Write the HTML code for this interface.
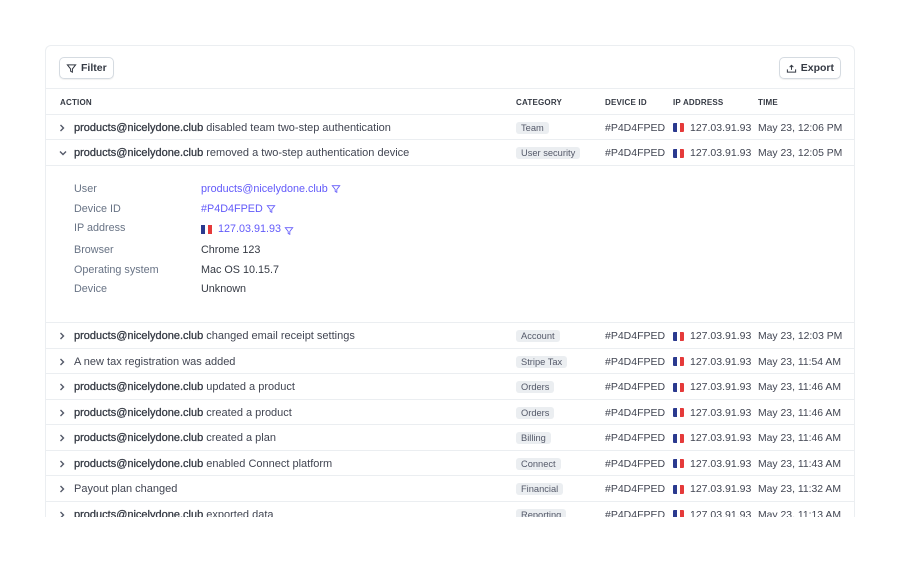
<!DOCTYPE html>
<html><head><style>
*{margin:0;padding:0;box-sizing:border-box}
body{width:900px;height:563px;background:#fff;font-family:"Liberation Sans",sans-serif;color:#414552;position:relative;overflow:hidden}
.card{position:absolute;left:45px;top:45px;width:810px;height:472px;border:1px solid #ebeef1;border-bottom:none;border-radius:6px 6px 0 0;overflow:hidden}
.btn{position:absolute;top:11px;height:22px;border:1px solid #d5dbe1;border-radius:5px;font-size:10.5px;font-weight:bold;color:#353a44;display:flex;align-items:center;gap:4px;padding:0 6px;box-shadow:0 1px 1px rgba(0,0,0,.06);white-space:nowrap}
.btn svg{flex-shrink:0}
.line{position:absolute;left:0;right:0;height:1px;background:#ebeef1}
.row{position:absolute;left:0;right:0;height:25.5px;border-bottom:1px solid #ebeef1;font-size:10.5px}
.row>span{position:absolute;top:1px;line-height:25px;white-space:nowrap}
.chev{position:absolute;left:12px;top:8px}
.act{left:28px;font-size:11px}
.act b{color:#353a44;font-weight:normal;-webkit-text-stroke:0.3px #353a44}
.row>span.cat{left:470px;top:7px;line-height:12px;background:#ebeef1;color:#545969;font-size:9.3px;padding:0 5px;border-radius:3px}
.dev{left:559px}
.row>span.flag{left:627px;width:11px;height:9px;top:8.5px;display:flex;border-radius:1px;overflow:hidden}
.flag i{flex:1}
.ip{left:644px}
.tm{left:712px;font-size:10.4px;color:#414552}
.hd{position:absolute;top:52px;font-size:8px;font-weight:bold;color:#353a44;letter-spacing:.2px}
.dl{position:absolute;left:28px;font-size:10.8px;color:#687385}
.dv{position:absolute;left:155px;font-size:10.8px;color:#353a44;display:flex;align-items:center;gap:3px}
.lk{color:#625afa}
</style></head><body>
<div class="card">
<div class="btn" style="left:13px"><svg width="11" height="11" viewBox="0 0 12 12" fill="none" stroke="#353a44" stroke-width="1.1"><path d="M1.5 2h9L7 6.5V10L5 9V6.5z"/></svg>Filter</div>
<div class="btn" style="right:13px"><svg width="11" height="11" viewBox="0 0 12 12" fill="none" stroke="#353a44" stroke-width="1.1"><path d="M1.5 7v3h9V7M6 7.5V2.5M4 4.5l2-2 2 2"/></svg>Export</div>
<div class="line" style="top:42px"></div>
<div class="hd" style="left:14px">ACTION</div>
<div class="hd" style="left:470px">CATEGORY</div>
<div class="hd" style="left:559px">DEVICE ID</div>
<div class="hd" style="left:627px">IP ADDRESS</div>
<div class="hd" style="left:712px">TIME</div>
<div class="line" style="top:68px"></div>

<div class="row" style="top:68.5px"><svg class="chev" width="8" height="10" viewBox="0 0 8 10" fill="none" stroke="#545969" stroke-width="1.4"><path d="M2.5 2l3 3-3 3"/></svg><span class="act"><b>products@nicelydone.club</b> disabled team two-step authentication</span><span class="cat">Team</span><span class="dev">#P4D4FPED</span><span class="flag"><i style="background:#2b3a8f"></i><i style="background:#fff"></i><i style="background:#e53a3a"></i></span><span class="ip">127.03.91.93</span><span class="tm">May 23, 12:06 PM</span></div>
<div class="row" style="top:94px"><svg class="chev" width="10" height="10" viewBox="0 0 10 10" fill="none" stroke="#545969" stroke-width="1.4"><path d="M2 3.5l3 3 3-3"/></svg><span class="act"><b>products@nicelydone.club</b> removed a two-step authentication device</span><span class="cat">User security</span><span class="dev">#P4D4FPED</span><span class="flag"><i style="background:#2b3a8f"></i><i style="background:#fff"></i><i style="background:#e53a3a"></i></span><span class="ip">127.03.91.93</span><span class="tm">May 23, 12:05 PM</span></div>

<div class="dl" style="top:137px">User</div><div class="dv lk" style="top:137px">products@nicelydone.club <svg width="10" height="10" viewBox="0 0 12 12" fill="none" stroke="#625afa" stroke-width="1"><path d="M1.5 2h9L7 6.5V10L5 9V6.5z"/></svg></div>
<div class="dl" style="top:157px">Device ID</div><div class="dv lk" style="top:157px">#P4D4FPED <svg width="10" height="10" viewBox="0 0 12 12" fill="none" stroke="#625afa" stroke-width="1"><path d="M1.5 2h9L7 6.5V10L5 9V6.5z"/></svg></div>
<div class="dl" style="top:176px">IP address</div><div class="dv lk" style="top:176px"><span style="display:flex;width:11px;height:9px;margin-right:3px"><i style="flex:1;background:#2b3a8f"></i><i style="flex:1;background:#fff"></i><i style="flex:1;background:#e53a3a"></i></span>127.03.91.93 <svg width="10" height="10" viewBox="0 0 12 12" fill="none" stroke="#625afa" stroke-width="1" style="margin-top:4px"><path d="M1.5 2h9L7 6.5V10L5 9V6.5z"/></svg></div>
<div class="dl" style="top:198px">Browser</div><div class="dv" style="top:198px">Chrome 123</div>
<div class="dl" style="top:218px">Operating system</div><div class="dv" style="top:218px">Mac OS 10.15.7</div>
<div class="dl" style="top:237px">Device</div><div class="dv" style="top:237px">Unknown</div>
<div class="line" style="top:276px"></div>

<div class="row" style="top:277px"><svg class="chev" width="8" height="10" viewBox="0 0 8 10" fill="none" stroke="#545969" stroke-width="1.4"><path d="M2.5 2l3 3-3 3"/></svg><span class="act"><b>products@nicelydone.club</b> changed email receipt settings</span><span class="cat">Account</span><span class="dev">#P4D4FPED</span><span class="flag"><i style="background:#2b3a8f"></i><i style="background:#fff"></i><i style="background:#e53a3a"></i></span><span class="ip">127.03.91.93</span><span class="tm">May 23, 12:03 PM</span></div>
<div class="row" style="top:302.5px"><svg class="chev" width="8" height="10" viewBox="0 0 8 10" fill="none" stroke="#545969" stroke-width="1.4"><path d="M2.5 2l3 3-3 3"/></svg><span class="act">A new tax registration was added</span><span class="cat">Stripe Tax</span><span class="dev">#P4D4FPED</span><span class="flag"><i style="background:#2b3a8f"></i><i style="background:#fff"></i><i style="background:#e53a3a"></i></span><span class="ip">127.03.91.93</span><span class="tm">May 23, 11:54 AM</span></div>
<div class="row" style="top:328px"><svg class="chev" width="8" height="10" viewBox="0 0 8 10" fill="none" stroke="#545969" stroke-width="1.4"><path d="M2.5 2l3 3-3 3"/></svg><span class="act"><b>products@nicelydone.club</b> updated a product</span><span class="cat">Orders</span><span class="dev">#P4D4FPED</span><span class="flag"><i style="background:#2b3a8f"></i><i style="background:#fff"></i><i style="background:#e53a3a"></i></span><span class="ip">127.03.91.93</span><span class="tm">May 23, 11:46 AM</span></div>
<div class="row" style="top:353.5px"><svg class="chev" width="8" height="10" viewBox="0 0 8 10" fill="none" stroke="#545969" stroke-width="1.4"><path d="M2.5 2l3 3-3 3"/></svg><span class="act"><b>products@nicelydone.club</b> created a product</span><span class="cat">Orders</span><span class="dev">#P4D4FPED</span><span class="flag"><i style="background:#2b3a8f"></i><i style="background:#fff"></i><i style="background:#e53a3a"></i></span><span class="ip">127.03.91.93</span><span class="tm">May 23, 11:46 AM</span></div>
<div class="row" style="top:379px"><svg class="chev" width="8" height="10" viewBox="0 0 8 10" fill="none" stroke="#545969" stroke-width="1.4"><path d="M2.5 2l3 3-3 3"/></svg><span class="act"><b>products@nicelydone.club</b> created a plan</span><span class="cat">Billing</span><span class="dev">#P4D4FPED</span><span class="flag"><i style="background:#2b3a8f"></i><i style="background:#fff"></i><i style="background:#e53a3a"></i></span><span class="ip">127.03.91.93</span><span class="tm">May 23, 11:46 AM</span></div>
<div class="row" style="top:404.5px"><svg class="chev" width="8" height="10" viewBox="0 0 8 10" fill="none" stroke="#545969" stroke-width="1.4"><path d="M2.5 2l3 3-3 3"/></svg><span class="act"><b>products@nicelydone.club</b> enabled Connect platform</span><span class="cat">Connect</span><span class="dev">#P4D4FPED</span><span class="flag"><i style="background:#2b3a8f"></i><i style="background:#fff"></i><i style="background:#e53a3a"></i></span><span class="ip">127.03.91.93</span><span class="tm">May 23, 11:43 AM</span></div>
<div class="row" style="top:430px"><svg class="chev" width="8" height="10" viewBox="0 0 8 10" fill="none" stroke="#545969" stroke-width="1.4"><path d="M2.5 2l3 3-3 3"/></svg><span class="act">Payout plan changed</span><span class="cat">Financial</span><span class="dev">#P4D4FPED</span><span class="flag"><i style="background:#2b3a8f"></i><i style="background:#fff"></i><i style="background:#e53a3a"></i></span><span class="ip">127.03.91.93</span><span class="tm">May 23, 11:32 AM</span></div>
<div class="row" style="top:455.5px"><svg class="chev" width="8" height="10" viewBox="0 0 8 10" fill="none" stroke="#545969" stroke-width="1.4"><path d="M2.5 2l3 3-3 3"/></svg><span class="act"><b>products@nicelydone.club</b> exported data</span><span class="cat">Reporting</span><span class="dev">#P4D4FPED</span><span class="flag"><i style="background:#2b3a8f"></i><i style="background:#fff"></i><i style="background:#e53a3a"></i></span><span class="ip">127.03.91.93</span><span class="tm">May 23, 11:13 AM</span></div>
</div>
</body></html>
